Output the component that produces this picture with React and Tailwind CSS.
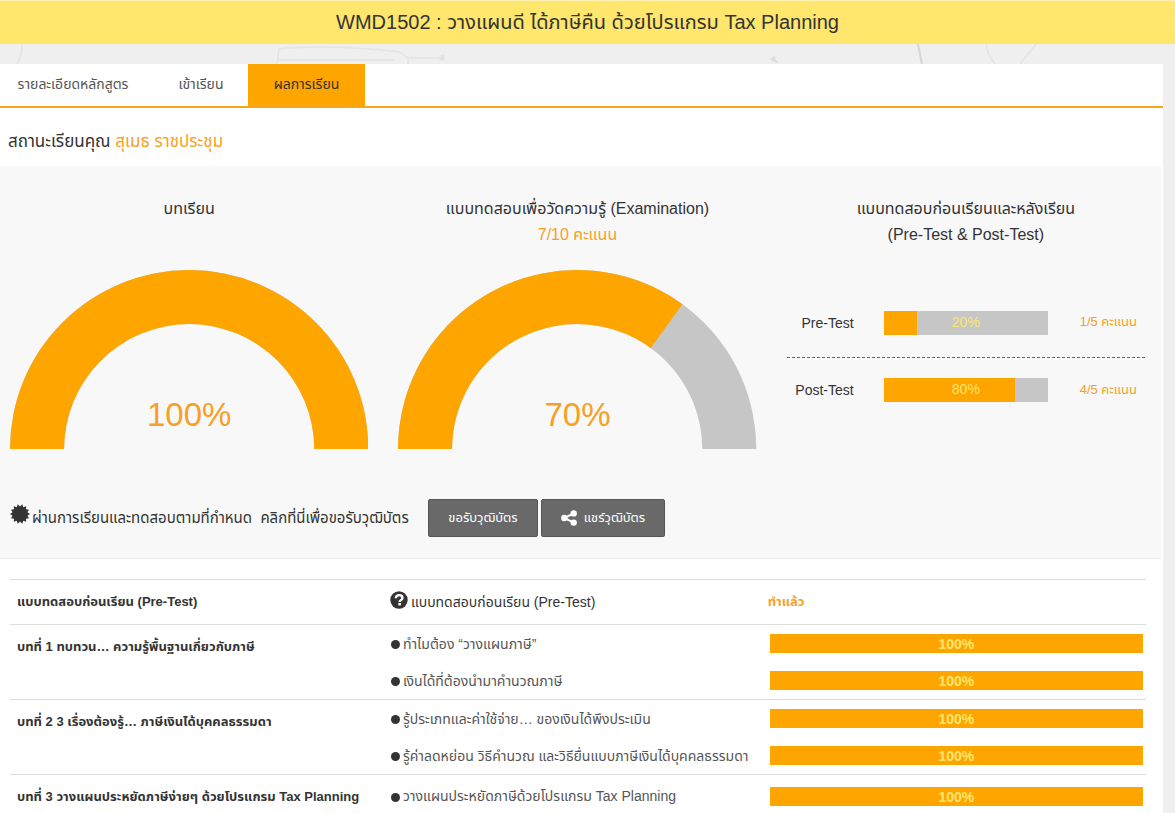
function CertificateIcon() {
  const teeth = 14;
  const points = Array.from({ length: teeth * 2 }, (_, i) => {
    const r = i % 2 ? 7.6 : 10;
    const a = ((i + 1) * Math.PI) / teeth;
    return `${(10 + r * Math.sin(a)).toFixed(2)},${(10 - r * Math.cos(a)).toFixed(2)}`;
  }).join(" ");
  return (
    <svg viewBox="0 0 20 20" className="mb-2 size-5 shrink-0 fill-[#333]" aria-hidden="true">
      <polygon points={points} />
    </svg>
  );
}

function ShareIcon() {
  return (
    <svg viewBox="0 0 16 16" className="size-4 shrink-0" aria-hidden="true">
      <path d="M12.6 3.3L3.4 8L12.6 12.7" fill="none" stroke="#fff" strokeWidth="2" />
      <g fill="#fff">
        <circle cx="3.3" cy="8" r="3.2" />
        <circle cx="12.7" cy="3.4" r="3.2" />
        <circle cx="12.7" cy="12.6" r="3.2" />
      </g>
    </svg>
  );
}

function QuestionIcon() {
  return (
    <svg viewBox="0 0 18 18" className="mb-1 size-[18px] shrink-0" aria-hidden="true">
      <circle cx="9" cy="9" r="8.7" fill="#333" />
      <path d="M5.8 7.2C5.8 5 7.2 4.1 9.1 4.1s3.4 1 3.4 2.8c0 2-2.9 2.1-2.9 4.1" fill="none" stroke="#fff" strokeWidth="2.4" />
      <rect x="8.3" y="12" width="2.6" height="2.4" fill="#fff" />
    </svg>
  );
}

function BackdropSketch() {
  return (
    <svg className="absolute inset-x-0 top-0 h-5 w-full" viewBox="0 0 1175 20" preserveAspectRatio="none" fill="none" stroke="#e3e3e4" strokeWidth="1.5" aria-hidden="true">
      <path d="M22 0Q22 12 17 20M277 20L279 5Q330 0 400 8M279 16H395M400 8L408 14H440L444 11M408 14V20M986 0Q988 12 995 20M1036 0L1020 20" />
      <path d="M918 0L922 20" stroke="#d6d6d7" strokeWidth="2" />
      <path d="M769 15l6-3 1 4 3 4Z" fill="#dcdcdd" stroke="none" />
      <circle cx="442" cy="14" r="2" fill="#e3e3e4" />
    </svg>
  );
}

function Gauge({ value }) {
  const a = Math.PI * (1 - value / 100);
  const px = (r) => (179 + r * Math.cos(a)).toFixed(2);
  const py = (r) => (179 - r * Math.sin(a)).toFixed(2);
  return (
    <div className="relative mt-[22px]">
      <svg viewBox="0 0 358 179" className="block w-full" role="img" aria-label={`${value}%`}>
        <path d="M0 179A179 179 0 0 1 358 179H304A125 125 0 0 0 54 179Z" fill="#c6c6c6" />
        <path d={`M0 179A179 179 0 0 1 ${px(179)} ${py(179)}L${px(125)} ${py(125)}A125 125 0 0 0 54 179Z`} fill="#ffa500" />
      </svg>
      <div className="absolute inset-x-0 bottom-[14px] text-center text-[33px] leading-10 text-[#f7a023]">{value}%</div>
    </div>
  );
}

function Score({ label, value, score, divider }) {
  return (
    <div className={`grid grid-cols-[67px_1fr_59px] items-center gap-[30px] pr-2 text-sm ${divider ? "h-[70px] border-b border-dashed border-[#666]" : "h-16"}`}>
      <span className="text-right whitespace-nowrap">{label}</span>
      <div className="relative h-6 bg-[#c6c6c6]">
        <div className="h-6 bg-[#ffa500]" style={{ width: `${value}%` }} />
        <div className="absolute inset-0 text-center leading-[22px] text-[#ffe66d]">{value}%</div>
      </div>
      <span className="text-right text-[13px] whitespace-nowrap text-[#f7a023]">{score}</span>
    </div>
  );
}

const lessons = [
  { title: "บทที่ 1 ทบทวน… ความรู้พื้นฐานเกี่ยวกับภาษี", items: ["ทำไมต้อง “วางแผนภาษี”", "เงินได้ที่ต้องนำมาคำนวณภาษี"] },
  { title: "บทที่ 2 3 เรื่องต้องรู้… ภาษีเงินได้บุคคลธรรมดา", items: ["รู้ประเภทและค่าใช้จ่าย… ของเงินได้พึงประเมิน", "รู้ค่าลดหย่อน วิธีคำนวณ และวิธียื่นแบบภาษีเงินได้บุคคลธรรมดา"] },
  { title: "บทที่ 3 วางแผนประหยัดภาษีง่ายๆ ด้วยโปรแกรม Tax Planning", items: ["วางแผนประหยัดภาษีด้วยโปรแกรม Tax Planning"] },
];

export default function App() {
  return (
    <div className="relative flex min-h-screen flex-col bg-[#efeff0] font-['Liberation_Sans','Noto_Sans_Thai',sans-serif] text-[#333]">
      <header className="border-t border-[#fff3b5] bg-[#ffe66d] text-center">
        <h1 className="h-[43px] text-[20px] leading-[42px]">WMD1502 : วางแผนดี ได้ภาษีคืน ด้วยโปรแกรม Tax Planning</h1>
      </header>
      <div className="relative h-5">
        <BackdropSketch />
      </div>
      <main className="mr-3 flex-1 bg-white">
        <nav className="flex h-11 border-b-2 border-[#f7a51c] text-sm leading-10 whitespace-nowrap">
          <a href="#detail" className="w-[146px] text-center text-[#555]">รายละเอียดหลักสูตร</a>
          <a href="#learn" className="w-[102px] pl-2 text-center text-[#555]">เข้าเรียน</a>
          <a href="#result" className="w-[117px] bg-[#ffa500] text-center">ผลการเรียน</a>
        </nav>
        <p className="h-[58px] pt-5 pl-2 text-[17px] leading-7">
          สถานะเรียนคุณ <span className="text-[#f7a023]">สุเมธ ราชประชุม</span>
        </p>
        <section className="mr-[2px] border-b border-[#ececec] bg-[#f8f8f8] pt-[30px] pr-4 pb-[21px] pl-[10px]">
          <div className="grid grid-cols-3 gap-[30px] text-base leading-[26px]">
            <div>
              <h2 className="h-[52px] text-center">บทเรียน</h2>
              <Gauge value={100} />
            </div>
            <div>
              <h2 className="text-center whitespace-nowrap">แบบทดสอบเพื่อวัดความรู้ (Examination)</h2>
              <p className="text-center text-[#f7a023]">7/10 คะแนน</p>
              <Gauge value={70} />
            </div>
            <div>
              <h2 className="text-center">แบบทดสอบก่อนเรียนและหลังเรียน<br />(Pre-Test &amp; Post-Test)</h2>
              <div className="mt-10">
                <Score label="Pre-Test" value={20} score="1/5 คะแนน" divider />
                <Score label="Post-Test" value={80} score="4/5 คะแนน" />
              </div>
            </div>
          </div>
          <div className="mt-[50px] flex items-center whitespace-nowrap">
            <CertificateIcon />
            <span className="ml-[2px] w-[396px] text-[15px]">ผ่านการเรียนและทดสอบตามที่กำหนด &nbsp;คลิกที่นี่เพื่อขอรับวุฒิบัตร</span>
            <button type="button" className="mr-[3px] h-[38px] w-[110px] rounded-xs border border-[#555] bg-[#696969] text-[13px] text-white">ขอรับวุฒิบัตร</button>
            <button type="button" className="flex h-[38px] w-[124px] items-center justify-center gap-[7px] rounded-xs border border-[#555] bg-[#696969] text-[13px] text-white">
              <ShareIcon />แชร์วุฒิบัตร
            </button>
          </div>
        </section>
        <div className="pt-5 pr-[17px] pl-[10px]">
          <table className="w-full table-fixed border-collapse text-sm">
            <colgroup>
              <col className="w-[33%]" />
              <col className="w-[33%]" />
              <col className="w-[34%]" />
            </colgroup>
            <tbody>
              <tr className="h-[45px] border-t border-[#ddd] text-left align-middle">
                <th scope="row" className="pl-[7px] text-[13px] font-bold whitespace-nowrap">แบบทดสอบก่อนเรียน (Pre-Test)</th>
                <td className="pl-[5px]">
                  <div className="flex items-center gap-[3px] whitespace-nowrap"><QuestionIcon /><span>แบบทดสอบก่อนเรียน (Pre-Test)</span></div>
                </td>
                <td className="pl-2 text-[13px] font-bold text-[#f7a023]">ทำแล้ว</td>
              </tr>
              {lessons.map((lesson) => (
                <tr key={lesson.title} className="border-t border-[#ddd] text-left align-top">
                  <th scope="row" className="pl-[7px] text-[13px] leading-[44px] font-bold whitespace-nowrap">{lesson.title}</th>
                  <td className="pl-[6px] text-[#555]">
                    {lesson.items.map((item) => (
                      <div key={item} className={`flex items-center gap-[3px] whitespace-nowrap ${lesson.items.length > 1 ? "h-[37px]" : "h-[42px]"}`}>
                        <span className="mt-[2px] size-[9px] shrink-0 rounded-full bg-[#333]" />{item}
                      </div>
                    ))}
                  </td>
                  <td className="pr-[3px] pl-[10px]">
                    {lesson.items.map((item) => (
                      <div key={item} className={`flex items-center ${lesson.items.length > 1 ? "h-[37px]" : "h-[42px]"}`}>
                        <div className="h-[19px] w-full bg-[#ffa500] text-center leading-5 font-bold text-[#ffe66d]">100%</div>
                      </div>
                    ))}
                  </td>
                </tr>
              ))}
            </tbody>
          </table>
        </div>
      </main>
    </div>
  );
}
